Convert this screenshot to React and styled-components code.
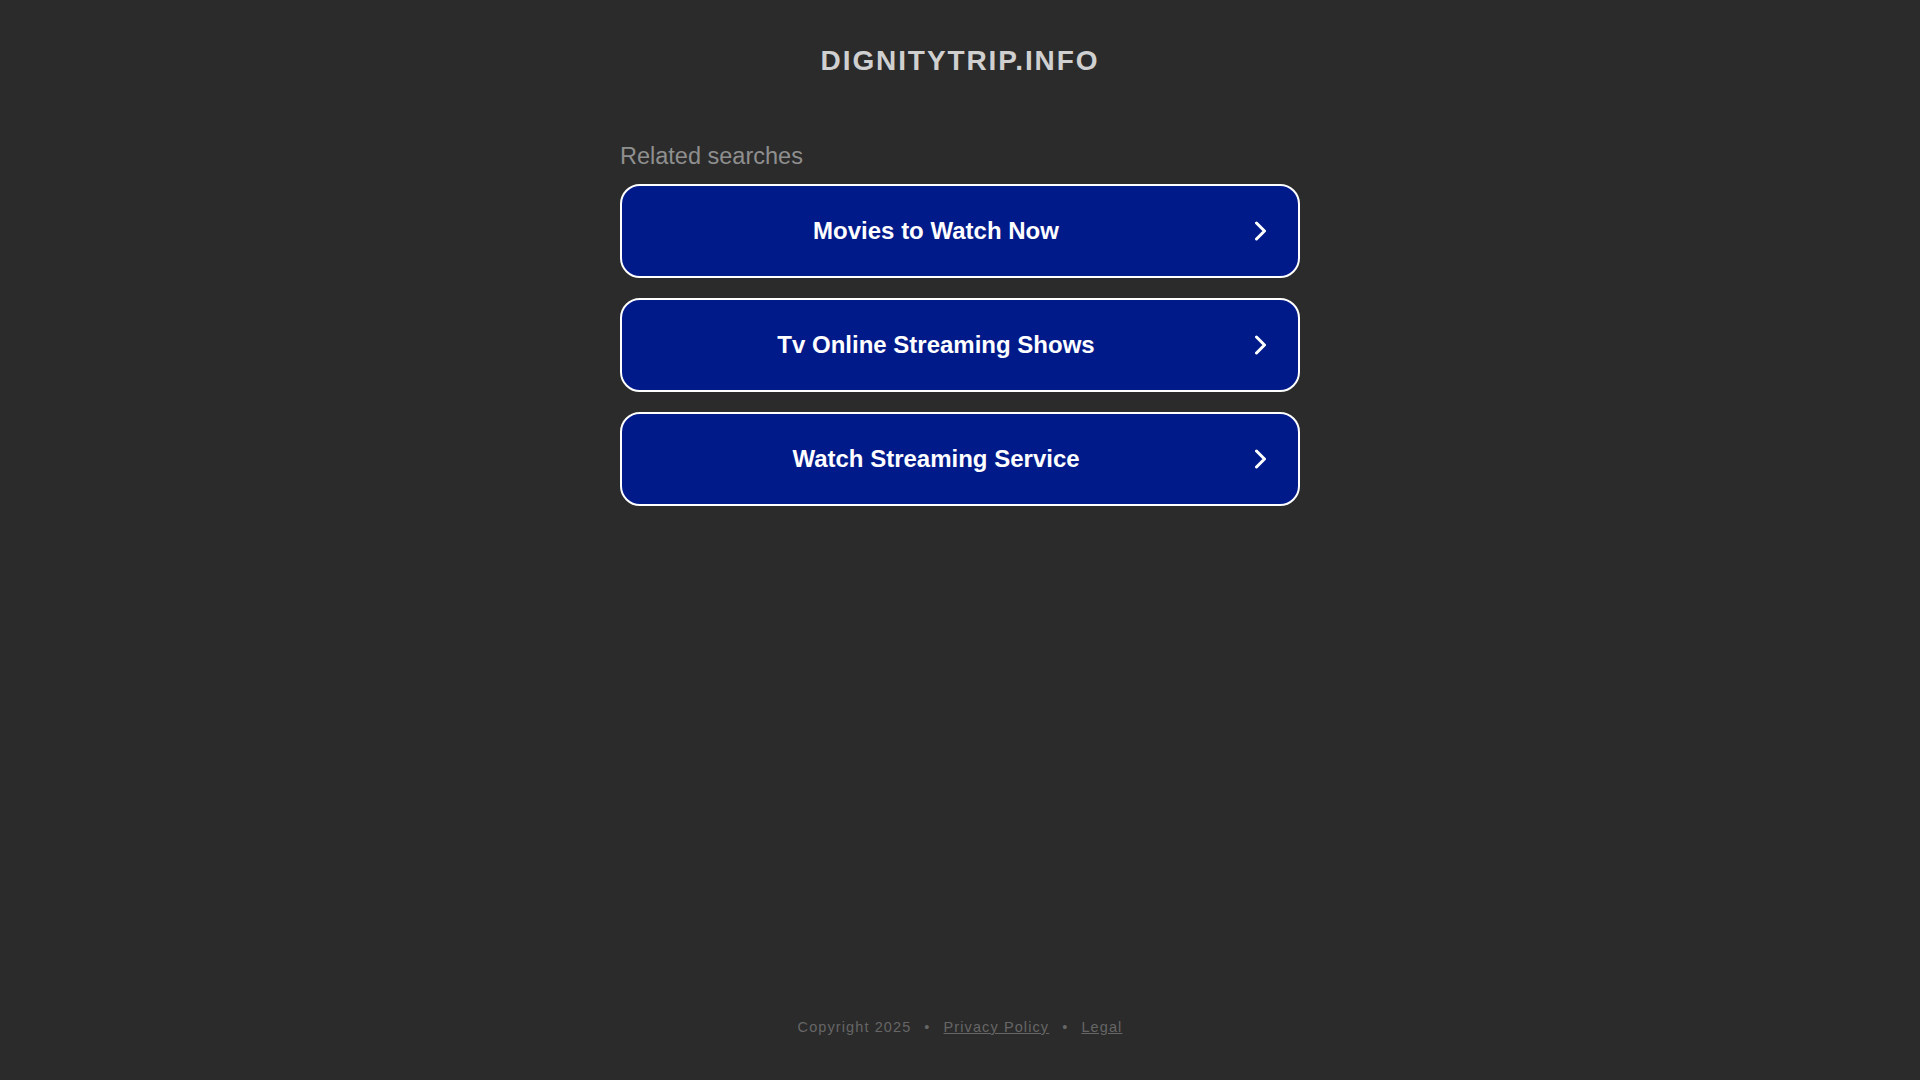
import React from 'react';
import styled, { createGlobalStyle } from 'styled-components';

const GlobalStyle = createGlobalStyle`
  html, body {
    margin: 0;
    padding: 0;
    background: #2b2b2b;
    font-family: Arial, "Liberation Sans", Helvetica, sans-serif;
  }
`;

const Page = styled.div`
  min-height: 100vh;
  display: flex;
  flex-direction: column;
  align-items: center;
  box-sizing: border-box;
`;

const Domain = styled.h1`
  margin: 45px 0 0;
  font-size: 28px;
  line-height: 31px;
  font-weight: 700;
  letter-spacing: 1.9px;
  text-transform: uppercase;
  color: #d0d0d0;
`;

const Searches = styled.section`
  width: 680px;
  margin-top: 67px;
  display: flex;
  flex-direction: column;
`;

const Heading = styled.h2`
  margin: 0 0 14px;
  font-size: 23.5px;
  line-height: 27px;
  font-weight: 400;
  color: #8f8f8f;
`;

const List = styled.div`
  display: flex;
  flex-direction: column;
  gap: 20px;
`;

const SearchLink = styled.a`
  display: flex;
  align-items: center;
  height: 94px;
  box-sizing: border-box;
  padding: 0 30px 0 20px;
  background: #011a8a;
  border: 2px solid #ffffff;
  border-radius: 20px;
  color: #ffffff;
  text-decoration: none;
  cursor: pointer;
`;

const Label = styled.span`
  flex: 1;
  text-align: center;
  font-size: 24px;
  font-weight: 700;
  margin-right: 24px;
`;

const Chevron = () => (
  <svg width="14" height="20" viewBox="0 0 14 20" fill="none">
    <path d="M2.5 2 L10.5 10 L2.5 18" stroke="#ffffff" strokeWidth="3" strokeLinecap="round" strokeLinejoin="round" />
  </svg>
);

const Footer = styled.footer`
  margin-top: auto;
  padding-bottom: 44px;
  display: flex;
  align-items: center;
  gap: 11px;
  font-size: 14.5px;
  line-height: 17px;
  letter-spacing: 1.1px;
  color: #666666;
`;

const FooterLink = styled.a`
  color: #666666;
  text-decoration: underline;
`;

const Dot = styled.span`
  padding: 0 2px;
`;

const searches = ['Movies to Watch Now', 'Tv Online Streaming Shows', 'Watch Streaming Service'];

export default function App() {
  return (
    <>
      <GlobalStyle />
      <Page>
        <Domain>dignitytrip.info</Domain>
        <Searches>
          <Heading>Related searches</Heading>
          <List>
            {searches.map((s) => (
              <SearchLink key={s}>
                <Label>{s}</Label>
                <Chevron />
              </SearchLink>
            ))}
          </List>
        </Searches>
        <Footer>
          <span>Copyright 2025</span>
          <Dot>•</Dot>
          <FooterLink>Privacy Policy</FooterLink>
          <Dot>•</Dot>
          <FooterLink>Legal</FooterLink>
        </Footer>
      </Page>
    </>
  );
}
